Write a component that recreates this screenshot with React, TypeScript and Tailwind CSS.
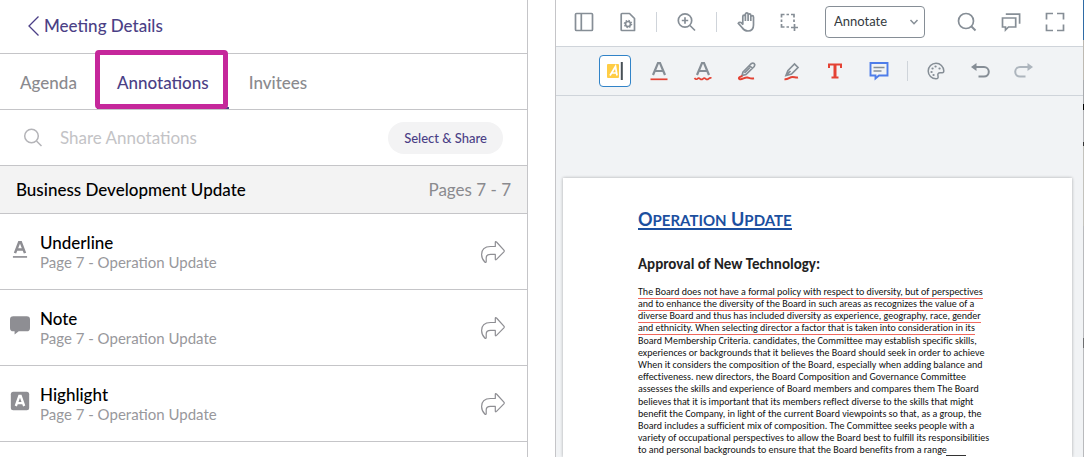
import { useState, type ReactNode } from 'react';

function Icon({ children, className = 'size-6' }: { children: ReactNode; className?: string }) {
  return (
    <svg viewBox="0 0 24 24" fill="none" stroke="currentColor" strokeWidth="1.7" className={className} aria-hidden="true">
      {children}
    </svg>
  );
}

function UnderlineGlyph() {
  return (
    <Icon className="size-5">
      <path d="M6 17 11 4h2l5 13M8 12.500h8" strokeWidth="3" />
      <path d="M3.500 21.500h17" strokeWidth="2" />
    </Icon>
  );
}

function NoteGlyph() {
  return (
    <Icon className="size-5">
      <path d="M4 1.500h16a4 4 0 0 1 4 4v10a4 4 0 0 1-4 4h-9.500L5.500 23.500v-4H4a4 4 0 0 1-4-4v-10a4 4 0 0 1 4-4z" fill="currentColor" stroke="none" />
    </Icon>
  );
}

function HighlightGlyph() {
  return (
    <Icon className="size-5">
      <rect x="1" y="1" width="22" height="22" rx="3" fill="currentColor" stroke="none" />
      <path d="M7 18 11.200 6h1.600L17 18M8.800 14.500h6.400" stroke="white" strokeWidth="2.800" />
    </Icon>
  );
}

const annotations = [
  { title: 'Underline', glyph: <UnderlineGlyph /> },
  { title: 'Note', glyph: <NoteGlyph /> },
  { title: 'Highlight', glyph: <HighlightGlyph /> },
];

function SidePanel() {
  const [tab, setTab] = useState('Annotations');
  return (
    <section className="flex flex-1 flex-col border-r border-[#c5c5c8] text-[17px] font-medium text-[#8a8a8e]">
      <header className="flex h-[54px] items-center border-b border-[#c5c5c8] pb-px pl-7">
        <a href="#meeting" className="flex items-center gap-1 text-[#4b3f86]">
          <svg viewBox="0 0 12 20" className="h-5 w-3" fill="none" stroke="currentColor" strokeWidth="1.3" aria-hidden="true">
            <path d="M10.500 .5 1 10l9.500 9.500" />
          </svg>
          Meeting Details
        </a>
      </header>

      <nav className="relative flex h-14 items-center border-b border-[#c5c5c8]">
        {['Agenda', 'Annotations', 'Invitees'].map((name) => (
          <button
            key={name}
            type="button"
            onClick={() => setTab(name)}
            className={
              name === tab
                ? 'h-full border-b-2 border-[#4b3f86] px-5 pt-1 text-[#4b3f86]'
                : 'h-full border-b-2 border-transparent px-5 pt-1'
            }
          >
            {name}
          </button>
        ))}
        <span className="pointer-events-none absolute -top-1 left-[95px] h-[59px] w-[133px] rounded-[4px] border-[5px] border-[#c5279b]" />
      </nav>

      <div className="flex h-14 items-center border-b border-[#c5c5c8] pt-px pr-6 pl-[22px]">
        <label htmlFor="share-search" className="text-[#b4b4b8]">
          <svg viewBox="0 0 22 22" className="size-[22px]" fill="none" stroke="currentColor" strokeWidth="1.5" aria-hidden="true">
            <circle cx="9.500" cy="9" r="6.800" />
            <path d="m14.500 14 5 5" />
          </svg>
        </label>
        <input
          id="share-search"
          aria-label="Share Annotations"
          placeholder="Share Annotations"
          className="ml-4 min-w-0 flex-1 font-normal outline-none placeholder:text-[#c3c3c6]"
        />
        <button type="button" className="h-8 rounded-full bg-[#f3f3f4] px-4 pt-px text-[13px] text-[#4b3f86]">
          Select &amp; Share
        </button>
      </div>

      <div className="flex h-12 items-center justify-between border-b border-[#c5c5c8] bg-[#f3f3f3] px-4">
        <h2 className="text-black">Business Development Update</h2>
        <span className="font-normal">Pages 7 - 7</span>
      </div>

      <ul>
        {annotations.map(({ title, glyph }) => (
          <li key={title} className="flex h-[76px] items-center border-b border-[#c5c5c8] pr-[22px] pl-2.5">
            <span className="-mt-1.5 text-[#8e8e93]">{glyph}</span>
            <div className="ml-2.5 flex-1 pt-0.5">
              <h3 className="leading-5 text-black">{title}</h3>
              <p className="text-[15px] leading-[19px] font-normal text-[#98989c]">Page 7 - Operation Update</p>
            </div>
            <button type="button" aria-label={`Share ${title}`} className="text-[#8e8e93]">
              <svg viewBox="0 0 24 24" className="size-6" fill="none" stroke="currentColor" strokeWidth="1.200" strokeLinejoin="round" aria-hidden="true">
                <path d="M14.300 6.500V2.400q0-1.400 1.200-.4l7.400 8.200q.7.800 0 1.600l-7.400 7.600q-1.200 1-1.200-.4v-4.600H9.500Q5.200 14.400 5.200 18v3.800q-.4 1.200-1.400.2Q.6 18.800.6 14.500C.6 9.200 4 6.600 9.500 6.500z" />
              </svg>
            </button>
          </li>
        ))}
      </ul>
    </section>
  );
}

function Tool({ label, className = '', children }: { label: string; className?: string; children: ReactNode }) {
  return (
    <button type="button" aria-label={label} className={`flex size-8 shrink-0 items-center justify-center ${className}`}>
      {children}
    </button>
  );
}

function Divider() {
  return <span className="h-5 w-px bg-[#cfd4da]" />;
}

function MainToolbar() {
  return (
    <div className="flex h-[47px] shrink-0 items-center border-b border-[#cfd4da] bg-white px-3 pb-0.5 text-[#868e96]">
      <Tool label="Toggle panel">
        <Icon>
          <rect x="3.500" y="3.500" width="17" height="17" rx="1" />
          <path d="M9.300 3.500v17" />
        </Icon>
      </Tool>
      <Tool label="View controls" className="ml-3">
        <Icon>
          <path d="M6 3.500h7.500l5 5v12H6a.8.8 0 0 1-.8-.8V4.300a.8.8 0 0 1 .8-.8z" strokeLinejoin="round" />
          <circle cx="12" cy="14" r="2.500" />
          <circle cx="12" cy="14" r="3.600" strokeWidth="1.300" strokeDasharray="1.400 1.430" />
        </Icon>
      </Tool>
      <span className="ml-3 h-5 w-px bg-[#cfd4da]" />
      <Tool label="Zoom in" className="ml-[13px]">
        <Icon>
          <circle cx="11" cy="10.500" r="6.700" />
          <path d="m16 15.500 5 5M11 7.300v6.400M7.800 10.500h6.400" />
        </Icon>
      </Tool>
      <span className="mx-3.5 h-5 w-px bg-[#cfd4da]" />
      <Tool label="Pan">
        <Icon>
          <path d="M7.800 14V6.500a1.300 1.300 0 0 1 2.600 0V11M10.400 10V4.300a1.300 1.300 0 0 1 2.700 0V11M13.100 10V5.300a1.300 1.300 0 0 1 2.700 0V11M15.800 11V7a1.300 1.300 0 0 1 2.700 0v8c0 3.800-2.300 6-5.500 6s-4.700-1.500-6-3.500L3.300 13.300c.8-1.500 2.500-1.200 3.400-.2l1.500 1.700" />
        </Icon>
      </Tool>
      <Tool label="Select area" className="ml-2.5">
        <Icon>
          <path d="M4.500 7.500V4.500h3M9.500 4.500h2.500M14 4.500h3v3M4.500 9.500V12M4.500 14v3h3M9.500 17H12M17 9.500V12M17.500 14v7M14 17.500h7" />
        </Icon>
      </Tool>
      <div className="relative ml-5">
        <select
          aria-label="Mode"
          className="h-8 w-[100px] appearance-none rounded-[4px] border border-[#868e96] bg-white px-2 text-[13px] text-[#343a40]"
        >
          <option>Annotate</option>
          <option>View</option>
        </select>
        <svg viewBox="0 0 10 10" className="pointer-events-none absolute top-[11px] right-1.5 size-2.5" fill="none" stroke="currentColor" strokeWidth="1.5" aria-hidden="true">
          <path d="m1.500 3 3.500 3.700L8.500 3" />
        </svg>
      </div>
      <Tool label="Search" className="ml-auto">
        <Icon>
          <circle cx="11" cy="11" r="7.500" />
          <path d="m16.500 16.500 4 4" strokeWidth="2" />
        </Icon>
      </Tool>
      <Tool label="Comments" className="ml-3">
        <Icon>
          <path d="M3.500 8h13.200v9H9.500L6.500 20v-3h-3zM6.800 4.200h13.800v9.600" />
        </Icon>
      </Tool>
      <Tool label="Full screen" className="ml-3">
        <Icon>
          <path d="M3.500 9.500V3.500H10M14 3.500h6.500v6M20.500 14.500v6H14M10 20.500H3.500v-6" />
        </Icon>
      </Tool>
    </div>
  );
}

function AnnotateToolbar() {
  return (
    <div className="flex h-[49px] shrink-0 items-center justify-center gap-3 border-b border-[#cfd4da] text-[#868e96]">
      <Tool label="Highlight" className="rounded-[4px] border border-[#3183c8] bg-white">
        <Icon>
          <rect x="4" y="5" width="12" height="14" rx="1" fill="#ffcd45" stroke="none" />
          <path d="M7 16.500 12.500 7.500l1.500 9M9 14h5" stroke="white" />
          <path d="M18.800 3v18" stroke="#485056" strokeWidth="2" />
        </Icon>
      </Tool>
      <Tool label="Underline">
        <Icon>
          <path d="m6 16 5-12h2l5 12M8 12h8" strokeWidth="2.200" />
          <path d="M3.500 20.300h17" stroke="#e44234" />
        </Icon>
      </Tool>
      <Tool label="Squiggly">
        <Icon>
          <path d="m6 16 5-12h2l5 12M8 12h8" strokeWidth="2.200" />
          <path d="M3.500 19q1.400 2 2.800.8t2.800 0 2.800 0 2.800 0 2.800 0T20.500 19" stroke="#e44234" />
        </Icon>
      </Tool>
      <Tool label="Pen">
        <Icon>
          <path d="M8 13 16.500 4.500q1.500-1 2.700.2t0 2.800L11 15.500 7 16.500zM14.500 6.500l3 3M9.500 14l5.500-5.500" />
          <path d="M7.500 17c-3 .5-4.500 2.200-3 3 2.500 1 5-2 8-1.500 2 .5 3.500 1.500 6.500.8" stroke="#e44234" strokeWidth="2" />
        </Icon>
      </Tool>
      <Tool label="Highlighter">
        <Icon>
          <path d="M9 11.500 15.500 5 19 8.500l-6.500 6.500L7 16.500zM7 16.500l4.500-4.500" />
          <path d="M5.500 20.300c3.500.5 5-2.300 8-2.300 2 0 3.500 1 5.500.5" stroke="#e44234" strokeWidth="2" />
        </Icon>
      </Tool>
      <Tool label="Text" className="text-[#e44234]">
        <Icon>
          <path d="M6 9V5.500h12V9" strokeWidth="2" />
          <path d="M12 5v13.500" strokeWidth="3" />
          <path d="M8.500 18.500h7" strokeWidth="2" />
        </Icon>
      </Tool>
      <Tool label="Note">
        <Icon>
          <path d="M3.500 4h17v12.500H12L8.500 19.500v-3h-5z" stroke="#4e7de9" strokeWidth="1.900" />
          <path d="M6.500 8.500h11M6.500 12h8" />
        </Icon>
      </Tool>
      <Divider />
      <Tool label="Style">
        <Icon>
          <path d="M12 4.200a7.800 7.800 0 1 0 0 15.600c1.800 0 2.500-1 2-2.800-.6-2 .3-3.200 2-3.200h2.300c1.200 0 1.500-.8 1.500-2a7.800 7.800 0 0 0-7.800-7.600z" strokeWidth="1.500" />
          <path d="M8.500 9.500h.1M11.500 7.500h.1M15.500 9.500h.1M7.500 13h.1M9.500 16h.1" strokeWidth="2.200" strokeLinecap="round" />
        </Icon>
      </Tool>
      <Tool label="Undo">
        <Icon>
          <path d="M5 8h11a4.800 4.800 0 0 1 0 9.600h-5.500" strokeWidth="2" />
          <path d="M8.500 4v8L3 8z" fill="currentColor" stroke="none" />
        </Icon>
      </Tool>
      <Tool label="Redo" className="text-[#adb5bd]">
        <Icon>
          <path d="M19 8H8a4.800 4.800 0 0 0 0 9.600h5.500" strokeWidth="2" />
          <path d="M15.500 4v8L21 8z" fill="currentColor" stroke="none" />
        </Icon>
      </Tool>
    </div>
  );
}

const underlined = [
  'The Board does not have a formal policy with respect to diversity, but of perspectives',
  'and to enhance the diversity of the Board in such areas as recognizes the value of a',
  'diverse Board and thus has included diversity as experience, geography, race, gender',
  'and ethnicity. When selecting director a factor that is taken into consideration in its',
];

const passages = [
  [
    'Board Membership Criteria. candidates, the Committee may establish specific skills,',
    'experiences or backgrounds that it believes the Board should seek in order to achieve',
    'When it considers the composition of the Board, especially when adding balance and',
    'effectiveness. new directors, the Board Composition and Governance Committee',
    'assesses the skills and experience of Board members and compares them The Board',
  ],
  [
    'believes that it is important that its members reflect diverse to the skills that might',
    'benefit the Company, in light of the current Board viewpoints so that, as a group, the',
    'Board includes a sufficient mix of composition. The Committee seeks people with a',
    'variety of occupational perspectives to allow the Board best to fulfill its responsibilities',
    'to and personal backgrounds to ensure that the Board benefits from a range',
  ],
];

function DocumentPage() {
  return (
    <article className="mt-[82px] mr-[11px] ml-[7px] flex-1 bg-white pl-[75px] font-['Carlito','Calibri','Lato',sans-serif] text-[#222] shadow-[0_0_3px_rgba(0,0,0,0.3)] [font-variant-ligatures:none]">
      <h1 className="pt-[33px] font-['Lato',sans-serif] text-[18px] leading-4 font-bold text-[#1b4f9f]">
        <span className="inline-block border-b-2 border-[#1b4f9f]">
          O<span className="text-[15px]">PERATION</span> U<span className="text-[15px]">PDATE</span>
        </span>
      </h1>
      <h2 className="mt-6 text-[15px] leading-5 font-bold">Approval of New Technology:</h2>
      <div className="relative mt-3 space-y-px text-[10px] leading-3 whitespace-nowrap text-[#111]">
        <p>
          {underlined.map((line) => (
            <span key={line} className="block">
              <span className="border-b border-[#f0685e]">{line}</span>
            </span>
          ))}
        </p>
        {passages.map((lines) => (
          <p key={lines[0]}>
            {lines.map((line) => (
              <span key={line} className="block">{line}</span>
            ))}
          </p>
        ))}
        <span className="absolute bottom-0 left-[308px] h-px w-5 bg-[#333]" />
      </div>
    </article>
  );
}

function WindowEdge() {
  return (
    <div className="flex w-px flex-col bg-[#b9babd]">
      <span className="h-10 bg-[#2f6ba5]" />
      <span className="h-10 bg-[#bdb9b2]" />
      <span className="h-6 bg-[#a9abae]" />
      <span className="h-1.5 bg-black" />
      <span className="h-8 bg-[#b4b5b8]" />
      <span className="h-1 bg-[#333]" />
      <span className="h-20 bg-[#c3c2bd]" />
      <span className="h-28 bg-[#b9babd]" />
      <span className="h-2.5 bg-[#6d6e70]" />
    </div>
  );
}

export default function App() {
  return (
    <main className="flex h-screen overflow-hidden bg-white font-['Lato',sans-serif]">
      <SidePanel />
      <section className="ml-[27px] flex flex-1 flex-col border-l border-[#c5c5c8] bg-[#f1f3f5]">
        <MainToolbar />
        <AnnotateToolbar />
        <DocumentPage />
      </section>
      <WindowEdge />
    </main>
  );
}
